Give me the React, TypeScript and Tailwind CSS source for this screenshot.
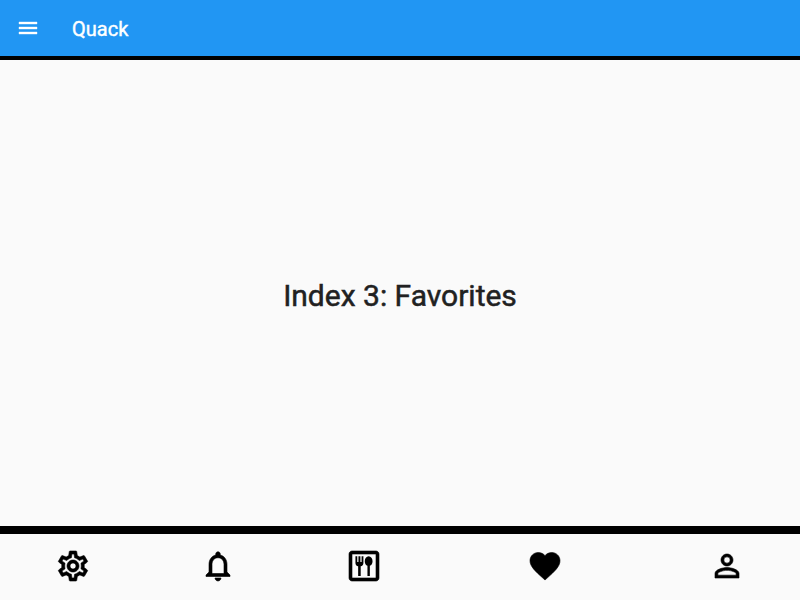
import { MdMenu, MdOutlineSettings, MdNotificationsNone, MdFavorite, MdPersonOutline } from "react-icons/md";

const heavy = "[&>path:last-child]:[stroke-width:0.4px]";

function MealIcon() {
  return (
    <svg width="36" height="36" viewBox="0 0 24 24" fill="currentColor">
      <path className="stroke-current [stroke-width:0.4px]" fillRule="evenodd" d="M20 2H4c-1.100 0-2 .9-2 2v16c0 1.100.9 2 2 2h16c1.100 0 2-.9 2-2V4c0-1.100-.9-2-2-2zm0 18H4V4h16v16z" />
      <path d="M15.100 5.500c-1.500 0-2.600 1.450-2.600 3.250 0 1.500.75 2.700 1.800 3.100V18.700h1.600v-6.850c1.050-.4 1.800-1.600 1.800-3.100 0-1.800-1.100-3.250-2.600-3.250z" />
      <path d="M10.400 5.500v3.800h-.8V5.500H8.300v3.800h-.8V5.500H6.300v4.500c0 1.100.7 2 1.800 2.200v6.500h1.700v-6.500c1.100-.2 1.800-1.100 1.800-2.200V5.500z" />
    </svg>
  );
}

export default function App() {
  return (
    <div className="flex h-screen w-full flex-col overflow-hidden bg-[#fafafa] font-[Roboto,sans-serif]">
      <header className="flex h-14 shrink-0 items-center bg-[#2196f3] px-4 text-white">
        <button aria-label="Menu"><MdMenu size={24} className={heavy} /></button>
        <h1 className="ml-8 pt-0.5 text-xl font-normal leading-6 [-webkit-text-stroke:0.4px_currentColor]">Quack</h1>
      </header>
      <div className="h-1 shrink-0 bg-black" />
      <main className="flex flex-1 items-center justify-center">
        <p className="pt-1.5 text-[30px] leading-9 text-[#212121] [-webkit-text-stroke:0.5px_currentColor]">Index 3: Favorites</p>
      </main>
      <div className="h-2 shrink-0 bg-black" />
      <nav className="grid h-[66px] shrink-0 grid-cols-[2fr_2fr_2fr_3fr_2fr] pb-0.5 text-black">
        <button className="flex items-center justify-center"><MdOutlineSettings size={36} className={heavy} /></button>
        <button className="flex items-center justify-center"><MdNotificationsNone size={36} className={heavy} /></button>
        <button className="flex items-center justify-center"><MealIcon /></button>
        <button className="flex items-center justify-center"><MdFavorite size={36} className={heavy} /></button>
        <button className="flex items-center justify-center"><MdPersonOutline size={36} className={heavy} /></button>
      </nav>
    </div>
  );
}
